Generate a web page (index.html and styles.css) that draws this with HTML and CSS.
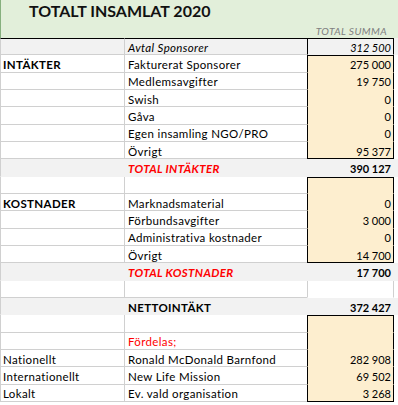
FILE: index.html
```html
<!DOCTYPE html>
<html lang="sv">
<head>
<meta charset="utf-8">
<title>Totalt insamlat 2020</title>
<link rel="stylesheet" href="styles.css">
</head>
<body>
<div class="head">
  <div class="title">TOTALT INSAMLAT 2020</div>
  <div class="subtitle">TOTAL SUMMA</div>
</div>
<div class="sheet">
  <div class="row first shade"><div class="a"></div><div class="b it">Avtal Sponsorer</div><div class="c frame it">312 500</div></div>

  <div class="row"><div class="a bold">INTÄKTER</div><div class="b">Fakturerat Sponsorer</div><div class="c box top">275 000</div></div>
  <div class="row"><div class="a"></div><div class="b">Medlemsavgifter</div><div class="c box">19 750</div></div>
  <div class="row"><div class="a"></div><div class="b">Swish</div><div class="c box">0</div></div>
  <div class="row"><div class="a"></div><div class="b">Gåva</div><div class="c box">0</div></div>
  <div class="row"><div class="a"></div><div class="b">Egen insamling NGO/PRO</div><div class="c box">0</div></div>
  <div class="row"><div class="a"></div><div class="b">Övrigt</div><div class="c box bot">95 377</div></div>
  <div class="row total"><div class="a"></div><div class="b red bold it">TOTAL INTÄKTER</div><div class="c bold">390 127</div></div>

  <div class="row"><div class="a"></div><div class="b"></div><div class="c box top"></div></div>
  <div class="row"><div class="a bold">KOSTNADER</div><div class="b">Marknadsmaterial</div><div class="c box">0</div></div>
  <div class="row"><div class="a"></div><div class="b">Förbundsavgifter</div><div class="c box">3 000</div></div>
  <div class="row"><div class="a"></div><div class="b">Administrativa kostnader</div><div class="c box">0</div></div>
  <div class="row"><div class="a"></div><div class="b">Övrigt</div><div class="c box bot">14 700</div></div>
  <div class="row total"><div class="a"></div><div class="b red bold it">TOTAL KOSTNADER</div><div class="c bold">17 700</div></div>

  <div class="row"><div class="a"></div><div class="b"></div><div class="c plain"></div></div>
  <div class="row total"><div class="a"></div><div class="b bold">NETTOINTÄKT</div><div class="c bold">372 427</div></div>

  <div class="row"><div class="a"></div><div class="b"></div><div class="c box top"></div></div>
  <div class="row"><div class="a"></div><div class="b red">Fördelas;</div><div class="c box"></div></div>
  <div class="row"><div class="a">Nationellt</div><div class="b">Ronald McDonald Barnfond</div><div class="c box">282 908</div></div>
  <div class="row"><div class="a">Internationellt</div><div class="b">New Life Mission</div><div class="c box">69 502</div></div>
  <div class="row"><div class="a">Lokalt</div><div class="b">Ev. vald organisation</div><div class="c box bot">3 268</div></div>
</div>
</body>
</html>
```
FILE: styles.css
```css
html, body {
  margin: 0;
  padding: 0;
  background: #ffffff;
}

body {
  font-family: Lato, "Liberation Sans", sans-serif;
  font-size: 11px;
  color: #000000;
  width: 398px;
}

.head {
  height: 38px;
  background: #e2efda;
  border-left: 1px solid #86b07e;
  box-sizing: border-box;
}

.title {
  height: 22px;
  padding-left: 28px;
  padding-top: 1px;
  box-sizing: border-box;
  font-size: 16px;
  line-height: 20px;
  font-weight: 700;
  color: #111111;
}

.subtitle {
  height: 16px;
  padding-top: 2px;
  padding-right: 11px;
  box-sizing: border-box;
  text-align: right;
  font-size: 10.2px;
  letter-spacing: 0.4px;
  line-height: 14px;
  font-style: italic;
  color: #808080;
}

.sheet {
  display: flex;
  flex-direction: column;
}

.row {
  display: flex;
  height: 17.33px;
}

.row > div {
  box-sizing: border-box;
  display: flex;
  align-items: flex-end;
  line-height: 12px;
  padding-bottom: 0.6px;
  border-bottom: 1px solid transparent;
  white-space: nowrap;
}

.a {
  width: 125px;
  padding-left: 2px;
  font-size: 11.5px;
  letter-spacing: 0.35px;
  border-left: 1px solid #d0d0d0;
  border-right: 1px solid #d0d0d0;
}

.row > .a,
.row > .b {
  border-bottom-color: #d0d0d0;
}

.b {
  width: 182px;
  padding-left: 3px;
  font-size: 11.5px;
  letter-spacing: 0.35px;
}

.c {
  width: 87px;
  justify-content: flex-end;
  padding-right: 2px;
  border-left: 1px solid transparent;
  border-right: 1px solid transparent;
}

.c.plain {
  border-left-color: #d0d0d0;
  border-right-color: #d0d0d0;
}

.c.box {
  background: #fdeecf;
  border-left-color: #000000;
  border-right-color: #000000;
}

.c.frame {
  border-left-color: #000000;
  border-right-color: #000000;
}

.c.top {
  border-top: 1px solid #000000;
}

.row > .c.bot {
  border-bottom-color: #000000;
}

.row.first > div {
  border-top: 1px solid #000000;
}

.row.shade {
  background: #f2f2f2;
}

.row.total {
  background: #f2f2f2;
}

.row.total > .a {
  border-right-color: transparent;
}

.row.total > .a,
.row.total > .b {
  border-bottom-color: transparent;
}

.bold {
  font-weight: 700;
}

.it {
  font-style: italic;
}

.red {
  color: #ff0000;
}
```
